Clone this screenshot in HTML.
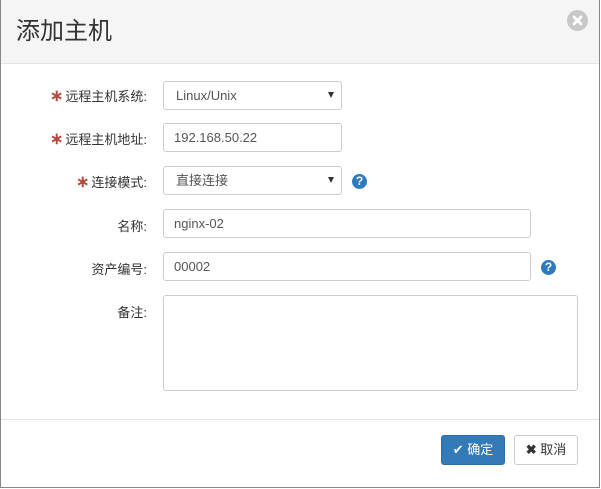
<!DOCTYPE html>
<html><head><meta charset="utf-8"><style>
*{box-sizing:border-box;margin:0;padding:0}
body{width:601px;height:489px;background:#fff;font-family:"Liberation Sans","Noto Sans CJK SC",sans-serif;font-size:13px;color:#333;position:relative;overflow:hidden}
.modal{position:absolute;left:0;top:0;width:600px;height:488px;border:1px solid #888;border-top:none}
.hdr{position:absolute;left:0;top:0;width:598px;height:64px;background:#f5f5f5;border-bottom:1px solid #e2e2e2}
.title{position:absolute;left:15px;top:15px;font-size:24px;color:#333;line-height:34px}
.close{position:absolute;left:566px;top:10px;width:21px;height:21px;border-radius:50%;background:#c8c8c8}
.lbl{position:absolute;right:452px;font-size:13px;color:#333;text-align:right;white-space:nowrap}
.star{color:#b5473b;font-size:16px;font-weight:bold;margin-right:2px}
.inp{position:absolute;left:162px;height:29px;border:1px solid #ccc;border-radius:3px;padding:0 12px;line-height:27px;font-size:13px;color:#555;background:#fff}
.arr{position:absolute;right:7px;top:10px;width:0;height:0;border-left:3.5px solid transparent;border-right:3.5px solid transparent;border-top:6px solid #333}
.help{position:absolute;width:15px;height:15px;border-radius:50%;background:#2f7abf;color:#fff;font-weight:bold;font-size:12px;line-height:15px;text-align:center}
.foot{position:absolute;left:0;top:419px;width:598px;border-top:1px solid #e5e5e5}
.btn{position:absolute;top:435px;height:30px;border-radius:3px;font-size:13px;line-height:28px;text-align:center}
</style></head><body>
<div class="modal">
<div class="hdr"><div class="title">添加主机</div>
<div class="close"><svg width="21" height="21" viewBox="0 0 21 21"><path d="M7 7L14 14M14 7L7 14" stroke="#fff" stroke-width="2.8" stroke-linecap="round"/></svg></div></div>

<div class="lbl" style="top:86px"><span class="star">∗</span>远程主机系统:</div>
<div class="inp" style="top:81px;width:179px">Linux/Unix<div class="arr"></div></div>

<div class="lbl" style="top:129px"><span class="star">∗</span>远程主机地址:</div>
<div class="inp" style="top:123px;width:179px;padding-left:10px">192.168.50.22</div>

<div class="lbl" style="top:172px"><span class="star">∗</span>连接模式:</div>
<div class="inp" style="top:166px;width:179px">直接连接<div class="arr"></div></div>
<div class="help" style="left:351px;top:174px">?</div>

<div class="lbl" style="top:216px">名称:</div>
<div class="inp" style="top:209px;width:368px;padding-left:10px">nginx-02</div>

<div class="lbl" style="top:259px">资产编号:</div>
<div class="inp" style="top:252px;width:368px;padding-left:10px">00002</div>
<div class="help" style="left:540px;top:260px">?</div>

<div class="lbl" style="top:302px">备注:</div>
<div class="inp" style="top:295px;width:415px;height:96px"></div>

<div class="foot"></div>
<div class="btn" style="left:440px;width:64px;background:#337ab7;border:1px solid #2e6da4;color:#fff">✔ 确定</div>
<div class="btn" style="left:513px;width:64px;background:#fff;border:1px solid #ccc;color:#333"><b>✖</b> 取消</div>
</div>
</body></html>
